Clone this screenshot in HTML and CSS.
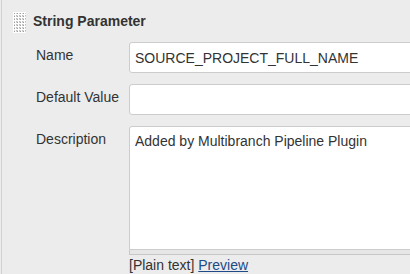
FILE: index.html
```html
<!DOCTYPE html>
<html lang="en">
<head>
  <meta charset="UTF-8" />
  <title>String Parameter</title>
  <link rel="stylesheet" href="styles.css">
</head>
<body>

  <div class="block">
    <div class="block-head">
      <svg class="grip" width="13" height="21" viewBox="0 0 13 21">
        <defs>
          <pattern id="dots" width="3" height="3" patternUnits="userSpaceOnUse">
            <rect x="0" y="0" width="1" height="1" fill="#bdbdbd" />
            <rect x="1" y="0" width="1" height="1" fill="#d6d6d6" />
            <rect x="0" y="1" width="1" height="1" fill="#d6d6d6" />
            <rect x="1" y="1" width="1" height="1" fill="#9e9e9e" />
          </pattern>
        </defs>
        <rect width="13" height="21" fill="#fff" />
        <rect x="1" y="1" width="12" height="20" fill="url(#dots)" />
      </svg>
      <h3>String Parameter</h3>
    </div>

    <div class="form">
      <label for="name">Name</label>
      <input type="text" id="name" value="SOURCE_PROJECT_FULL_NAME" />

      <label for="default">Default Value</label>
      <input type="text" id="default" value="" />

      <label for="desc">Description</label>
      <div class="desc">
        <textarea id="desc">Added by Multibranch Pipeline Plugin</textarea>
        <div class="grippie"></div>
        <div class="desc-mode">[Plain text] <a href="#">Preview</a></div>
      </div>
    </div>
  </div>

</body>
</html>
```

FILE: styles.css
```css
* {
  margin: 0;
  padding: 0;
  box-sizing: border-box;
}

html, body {
  overflow: hidden;
}

body {
  font-family: 'Liberation Sans', Arial, sans-serif;
  font-size: 14px;
  line-height: 17px;
  color: #333;
  background: #ececec;
  height: 274px;
}

.block {
  margin-left: 1px;
  border-left: 1px solid #d2d2d2;
  height: 274px;
  overflow: hidden;
}

.block-head {
  display: flex;
  align-items: flex-start;
  padding: 12px 0 0 11px;
}

.grip {
  display: block;
  flex-shrink: 0;
}

.block-head h3 {
  font-size: 14px;
  font-weight: bold;
  margin-left: 7px;
  padding-top: 1px;
}

.form {
  display: grid;
  grid-template-columns: 93px 320px;
  row-gap: 11px;
  padding: 9px 0 0 34px;
}

label {
  padding-top: 5px;
}

input, textarea {
  font-family: inherit;
  font-size: 14px;
  line-height: 17px;
  color: #333;
  background: #fff;
  border: 1px solid #ccc;
  border-radius: 3px;
  padding: 6px 5px;
  width: 100%;
  outline: none;
}

input {
  height: 31px;
}

textarea {
  display: block;
  height: 124px;
  resize: none;
  border-radius: 3px 3px 0 0;
}

.grippie {
  height: 5px;
  background: #e6e6e6;
  border: 1px solid #c8c8c8;
  border-top: none;
}

.desc-mode {
  padding-top: 2px;
}

.desc-mode a {
  color: #204a87;
}
```
